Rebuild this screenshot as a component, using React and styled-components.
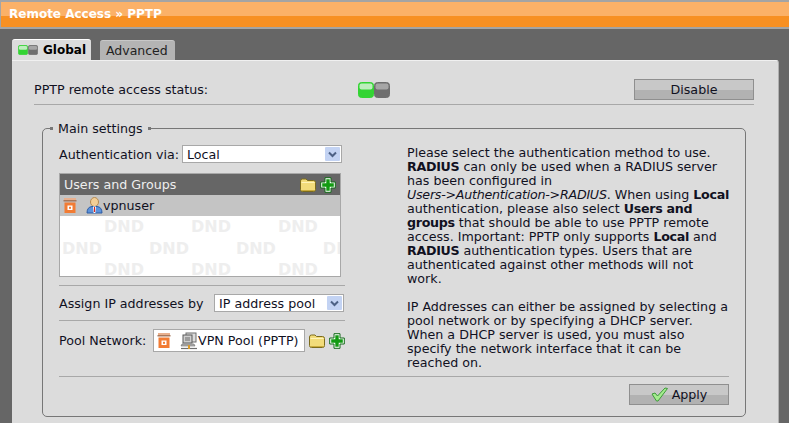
import React from 'react';
import styled, { createGlobalStyle } from 'styled-components';

const GlobalStyle = createGlobalStyle`
  html, body {
    margin: 0;
    padding: 0;
    height: 100%;
    overflow: hidden;
    background: #666;
  }
  body {
    font-family: 'DejaVu Sans', Verdana, sans-serif;
    font-size: 12.67px;
    color: #11111f;
  }
`;

const Page = styled.div`
  width: 789px;
  height: 423px;
  overflow: hidden;
  background: #666;
  display: flex;
  flex-direction: column;
`;

const TitleBar = styled.header`
  height: 29px;
  flex: none;
  box-sizing: border-box;
  padding: 0 0 0 8px;
  border: 0 solid #a4a4a4;
  border-width: 2px 0 2px 1px;
  background: linear-gradient(#fbb168 0, #fbb168 14px, #f79023 14px, #f79023 100%);
  color: #fff;
  font-size: 12px;
  font-weight: bold;
  line-height: 24px;
`;

const Content = styled.main`
  flex: 1;
  padding: 11px 10px 0 12px;
  min-height: 0;
`;

const Tabs = styled.nav`
  display: flex;
  align-items: flex-end;
  gap: 9px;
  height: 20px;
`;

const Tab = styled.div`
  box-sizing: border-box;
  height: ${(p) => (p.$active ? '21px' : '20px')};
  width: ${(p) => p.$width}px;
  padding-left: 6px;
  display: flex;
  align-items: center;
  gap: 5px;
  border-radius: 3px 3px 0 0;
  font-size: ${(p) => (p.$active ? '12px' : '12.5px')};
  background: ${(p) => (p.$active ? '#dcdcdc' : '#b4b4b4')};
  border-top: 1px solid ${(p) => (p.$active ? '#fff' : '#c8c8c8')};
  font-weight: ${(p) => (p.$active ? 'bold' : 'normal')};
  color: ${(p) => (p.$active ? '#000' : '#222')};
`;

const Panel = styled.section`
  background: #dcdcdc;
  border-top: 1px solid #f0f0f0;
  border-right: 1px solid #b0b0b0;
  height: 400px;
  padding: 18px 24px 0 22px;
  border-radius: 0 3px 0 0;
`;

const StatusRow = styled.div`
  display: grid;
  grid-template-columns: 324px 1fr auto;
  align-items: center;
  height: 21px;
  padding-bottom: 4px;
  border-bottom: 1px solid #a8a8a8;
`;

const GreyButton = styled.button`
  box-sizing: border-box;
  height: 21px;
  width: ${(p) => p.$width}px;
  display: flex;
  align-items: center;
  justify-content: center;
  gap: 4px;
  padding: 0;
  border: 1px solid #8f8f8f;
  background: linear-gradient(#c8c8c8 0, #c8c8c8 55%, #b2b2b2 55%, #b2b2b2 100%);
  font-family: inherit;
  font-size: 12.67px;
  color: #11111f;
`;

const SettingsBox = styled.fieldset`
  box-sizing: border-box;
  width: 704px;
  height: 295px;
  margin: 17px 0 0 8px;
  padding: 0 16px;
  border: 1px solid #777;
  border-radius: 5px;
  min-width: 0;
`;

const Legend = styled.legend`
  margin-left: -9px;
  padding: 0 8px;
  position: relative;
  line-height: 13px;

  &::before,
  &::after {
    content: '';
    position: absolute;
    top: 5px;
    width: 3px;
    height: 3px;
    background: #777;
  }
  &::before {
    left: 0;
  }
  &::after {
    right: 0;
  }
`;

const Columns = styled.div`
  display: flex;
  gap: 62px;
  margin-top: 10px;
`;

const LeftColumn = styled.div`
  width: 286px;
  flex: none;
`;

const FormRow = styled.div`
  display: flex;
  align-items: center;
  gap: ${(p) => p.$gap || 5}px;
  height: ${(p) => p.$height || 18}px;
  white-space: nowrap;
`;

const FieldLabel = styled.label`
  flex: none;
  width: ${(p) => p.$width}px;
`;

const Divider = styled.hr`
  margin: ${(p) => p.$margin || '0'};
  border: 0;
  height: 1px;
  background: #a8a8a8;
`;

const SelectBox = styled.div`
  box-sizing: border-box;
  flex: none;
  width: ${(p) => p.$width}px;
  height: 18px;
  display: flex;
  align-items: center;
  justify-content: space-between;
  padding: 0 1px 0 4px;
  background: #fff;
  border: 1px solid #a8a8a8;
`;

const SelectArrow = styled.span`
  width: 15px;
  height: 14px;
  display: flex;
  align-items: center;
  justify-content: center;
  background: #c3d3f3;
  border-radius: 1px;
`;

const ListBox = styled.div`
  box-sizing: border-box;
  width: 282px;
  height: 104px;
  margin-top: 10px;
  border: 1px solid #a8a8a8;
  background: #fff;
  position: relative;
  overflow: hidden;
`;

const ListHeader = styled.div`
  height: 21px;
  display: flex;
  align-items: center;
  justify-content: space-between;
  padding: 0 4px;
  background: #666;
  color: #eee;
`;

const IconGroup = styled.div`
  display: flex;
  align-items: center;
  gap: 4px;
`;

const ListRow = styled.div`
  height: 21px;
  display: flex;
  align-items: center;
  padding-left: 3px;
  background: #c4c4c4;
`;

const Spacer = styled.span`
  display: inline-block;
  flex: none;
  width: ${(p) => p.$width}px;
`;

const Watermark = styled.div`
  position: absolute;
  left: 0;
  top: 47px;
  display: flex;
  flex-direction: column;
  gap: 9.5px;
`;

const WatermarkRow = styled.div`
  display: flex;
  gap: 47px;
  margin-left: ${(p) => p.$offset}px;
  white-space: nowrap;
  color: #eee;
  font-size: 16px;
  font-weight: bold;
  line-height: 12px;
`;

const PoolBox = styled.div`
  box-sizing: border-box;
  flex: none;
  width: 152px;
  height: 23px;
  display: flex;
  align-items: center;
  padding-left: 3px;
  background: #fff;
  border: 1px solid #a8a8a8;
  white-space: nowrap;
`;

const HelpText = styled.div`
  width: 322px;
  line-height: 14px;
  padding-top: 1px;
  white-space: nowrap;

  p {
    margin: 0 0 14px;
  }
  p:last-child {
    margin-bottom: 0;
  }
  i {
    letter-spacing: -0.25px;
  }
  b {
    letter-spacing: -0.3px;
  }
`;

const Footer = styled.div`
  display: flex;
  justify-content: flex-end;
  padding-top: 7px;
`;

const Led = ({ fill, top, x }) => (
  <g transform={`translate(${x} 0)`}>
    <rect x="0.5" y="0.5" width="15" height="15" rx="3" fill={fill} stroke={fill} />
    <rect x="1.5" y="1.5" width="13" height="6" rx="2" fill={top} />
  </g>
);

const Toggle = ({ size = 32 }) => (
  <svg width={size} height={size / 2} viewBox="0 0 32 16">
    <Led x={0} fill="#33d433" top="#bdeebd" />
    <Led x={16} fill="#6e6e6e" top="#a6a6a6" />
  </svg>
);

const FolderIcon = () => (
  <svg width="16" height="14" viewBox="0 0 16 14">
    <path d="M0.5 3 Q0.5 1 2.5 1 H6 L7.5 2.5 H13.5 Q15.5 2.5 15.5 4.5 V11.5 Q15.5 13.5 13.5 13.5 H2.5 Q0.5 13.5 0.5 11.5 Z" fill="#f2dc7a" stroke="#7d6c1c" />
    <path d="M1.5 4.5 H14.5" stroke="#fff4b8" />
    <path d="M1.5 12.5 H14.5" stroke="#c9ab3c" />
  </svg>
);

const PlusIcon = () => (
  <svg width="16" height="16" viewBox="0 0 16 16">
    <path d="M5 0.7 H11 V5 H15.3 V11 H11 V15.3 H5 V11 H0.7 V5 H5 Z" fill="#f4fff4" stroke="#14691a" strokeLinejoin="round" />
    <path d="M6.3 2.2 H9.7 V6.3 H13.8 V9.7 H9.7 V13.8 H6.3 V9.7 H2.2 V6.3 H6.3 Z" fill="#129a12" />
  </svg>
);

const BinIcon = () => (
  <svg width="14" height="15" viewBox="0 0 14 15">
    <rect x="1" y="0" width="12" height="2" fill="#e9b08e" />
    <rect x="0.5" y="2" width="13" height="1.5" fill="#a8775a" />
    <rect x="1.5" y="4.5" width="11" height="10.5" fill="#f27c34" />
    <rect x="4.5" y="7.5" width="5" height="4.5" fill="#fff" />
    <rect x="6" y="8.8" width="2" height="2" fill="#f27c34" />
  </svg>
);

const UserIcon = () => (
  <svg width="17" height="17" viewBox="0 0 17 17">
    <ellipse cx="8.5" cy="5" rx="4" ry="4.5" fill="#f3cf97" stroke="#b48a52" />
    <path d="M1 16 Q1 10 6 9.5 H11 Q16 10 16 16 Z" fill="#5c92da" stroke="#2b5ba5" />
    <path d="M7 9.5 H10 L9.4 16 H7.6 Z" fill="#fff" />
    <path d="M8 10 H9 L9.2 15 H7.8 Z" fill="#d8261f" />
  </svg>
);

const NetworkIcon = () => (
  <svg width="18" height="18" viewBox="0 0 18 18">
    <rect x="6" y="1" width="10" height="9" fill="#dcdcdc" stroke="#6f6f6f" />
    <rect x="3" y="3" width="9" height="8" fill="#cfcfcf" stroke="#5a5a5a" />
    <rect x="5" y="5" width="5" height="4" fill="#9c9c9c" />
    <path d="M2 12 H14 L15 14 H1 Z" fill="#b5b5b5" stroke="#666" strokeWidth="0.6" />
    <path d="M1 16.5 H17" stroke="#6f6f6f" strokeWidth="1.2" />
    <path d="M9 13 V17" stroke="#d99a2b" strokeWidth="2" />
  </svg>
);

const CheckIcon = () => (
  <svg width="17" height="15" viewBox="0 0 17 15">
    <path d="M1 7 L4 6 L6.5 9 L14 1 L16.5 1.5 L7 14 H5.5 Z" fill="#a4ec8e" stroke="#3e9a3a" strokeLinejoin="round" />
  </svg>
);

const ChevronDown = () => (
  <svg width="9" height="7" viewBox="0 0 9 7">
    <path d="M1 1.5 L4.5 5 L8 1.5" fill="none" stroke="#4d6185" strokeWidth="2" />
  </svg>
);

const Select = ({ value, width }) => (
  <SelectBox $width={width}>
    {value}
    <SelectArrow>
      <ChevronDown />
    </SelectArrow>
  </SelectBox>
);

const Marks = ({ offset, count }) => (
  <WatermarkRow $offset={offset}>
    {Array.from({ length: count }, (_, i) => (
      <span key={i}>DND</span>
    ))}
  </WatermarkRow>
);

const App = () => (
  <Page>
    <GlobalStyle />
    <TitleBar>Remote Access » PPTP</TitleBar>
    <Content>
      <Tabs>
        <Tab $active $width={79}>
          <Toggle size={20} />
          Global
        </Tab>
        <Tab $width={75}>Advanced</Tab>
      </Tabs>
      <Panel>
        <StatusRow>
          <span>PPTP remote access status:</span>
          <Toggle />
          <GreyButton $width={120}>Disable</GreyButton>
        </StatusRow>
        <SettingsBox>
          <Legend>Main settings</Legend>
          <Columns>
            <LeftColumn>
              <FormRow>
                <FieldLabel $width={118}>Authentication via:</FieldLabel>
                <Select value="Local" width={160} />
              </FormRow>
              <ListBox>
                <ListHeader>
                  Users and Groups
                  <IconGroup>
                    <FolderIcon />
                    <PlusIcon />
                  </IconGroup>
                </ListHeader>
                <ListRow>
                  <BinIcon />
                  <Spacer $width={9} />
                  <UserIcon />
                  vpnuser
                </ListRow>
                <Watermark>
                  <Marks offset={44} count={3} />
                  <Marks offset={2} count={4} />
                  <Marks offset={44} count={3} />
                </Watermark>
              </ListBox>
              <Divider $margin="8px 0" />
              <FormRow>
                <FieldLabel $width={150}>Assign IP addresses by</FieldLabel>
                <Select value="IP address pool" width={130} />
              </FormRow>
              <Divider $margin="8px 0" />
              <FormRow $height={23} $gap={4}>
                <FieldLabel $width={90}>Pool Network:</FieldLabel>
                <PoolBox>
                  <BinIcon />
                  <Spacer $width={9} />
                  <NetworkIcon />
                  VPN Pool (PPTP)
                </PoolBox>
                <IconGroup>
                  <FolderIcon />
                  <PlusIcon />
                </IconGroup>
              </FormRow>
            </LeftColumn>
            <HelpText>
              <p>
                Please select the authentication method to use.<br />
                <b>RADIUS</b> can only be used when a RADIUS server<br />
                has been configured in<br />
                <i>Users-&gt;Authentication-&gt;RADIUS</i>. When using <b>Local</b><br />
                authentication, please also select <b>Users and</b><br />
                <b>groups</b> that should be able to use PPTP remote<br />
                access. Important: PPTP only supports <b>Local</b> and<br />
                <b>RADIUS</b> authentication types. Users that are<br />
                authenticated against other methods will not<br />
                work.
              </p>
              <p>
                IP Addresses can either be assigned by selecting a<br />
                pool network or by specifying a DHCP server.<br />
                When a DHCP server is used, you must also<br />
                specify the network interface that it can be<br />
                reached on.
              </p>
            </HelpText>
          </Columns>
          <Divider $margin="6px 0 0" />
          <Footer>
            <GreyButton $width={100}>
              <CheckIcon />
              Apply
            </GreyButton>
          </Footer>
        </SettingsBox>
      </Panel>
    </Content>
  </Page>
);

export default App;
